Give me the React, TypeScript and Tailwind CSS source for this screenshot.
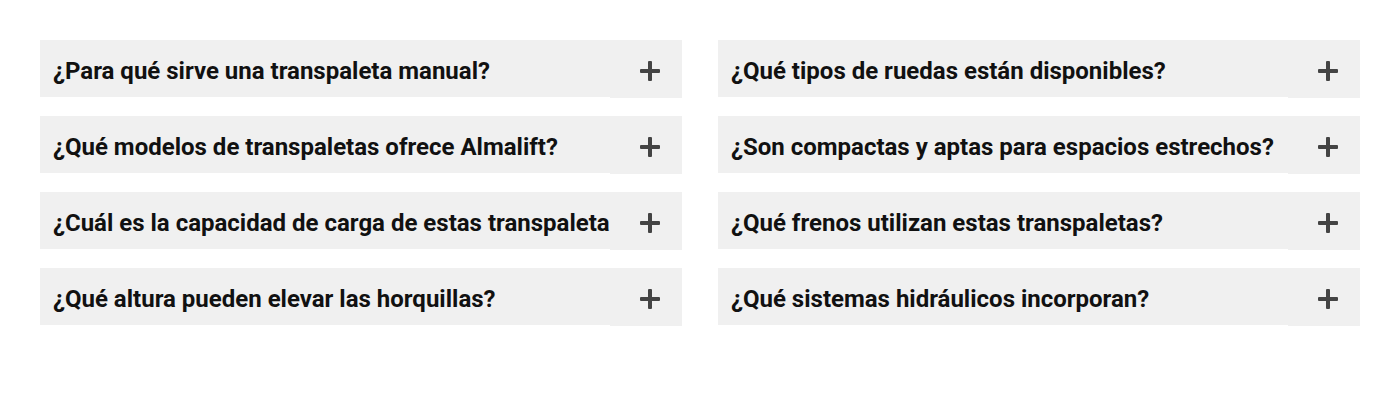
import React from "react";

const left = [
  "¿Para qué sirve una transpaleta manual?",
  "¿Qué modelos de transpaletas ofrece Almalift?",
  "¿Cuál es la capacidad de carga de estas transpaletas?",
  "¿Qué altura pueden elevar las horquillas?",
];
const right = [
  "¿Qué tipos de ruedas están disponibles?",
  "¿Son compactas y aptas para espacios estrechos?",
  "¿Qué frenos utilizan estas transpaletas?",
  "¿Qué sistemas hidráulicos incorporan?",
];

function Plus() {
  return (
    <svg width="20" height="20" viewBox="0 0 20 20" aria-hidden>
      <rect x="8" y="0" width="4" height="20" rx="1" fill="#444444" />
      <rect x="0" y="8" width="20" height="4" rx="1" fill="#444444" />
    </svg>
  );
}

function Item({ q }: { q: string }) {
  return (
    <div className="flex items-start">
      <div className="flex-1 min-w-0 h-[57px] bg-[#f0f0f0] pl-[13px] pt-[4px] flex items-center overflow-hidden whitespace-nowrap">
        <span className="text-[24px] leading-[28px] font-bold text-[#111111]" style={{ fontFamily: "Roboto, 'Noto Sans', sans-serif" }}>
          {q}
        </span>
      </div>
      <div className="w-[72px] h-[58px] bg-[#f0f0f0] pl-[30px] pt-[4px] flex items-center">
        <Plus />
      </div>
    </div>
  );
}

export default function App() {
  return (
    <div className="w-[1400px] h-[400px] bg-white px-[40px] pt-[40px]">
      <div className="grid grid-cols-2 gap-x-[36px]">
        <div className="flex flex-col gap-[18px]">
          {left.map((q) => (
            <Item key={q} q={q} />
          ))}
        </div>
        <div className="flex flex-col gap-[18px]">
          {right.map((q) => (
            <Item key={q} q={q} />
          ))}
        </div>
      </div>
    </div>
  );
}
